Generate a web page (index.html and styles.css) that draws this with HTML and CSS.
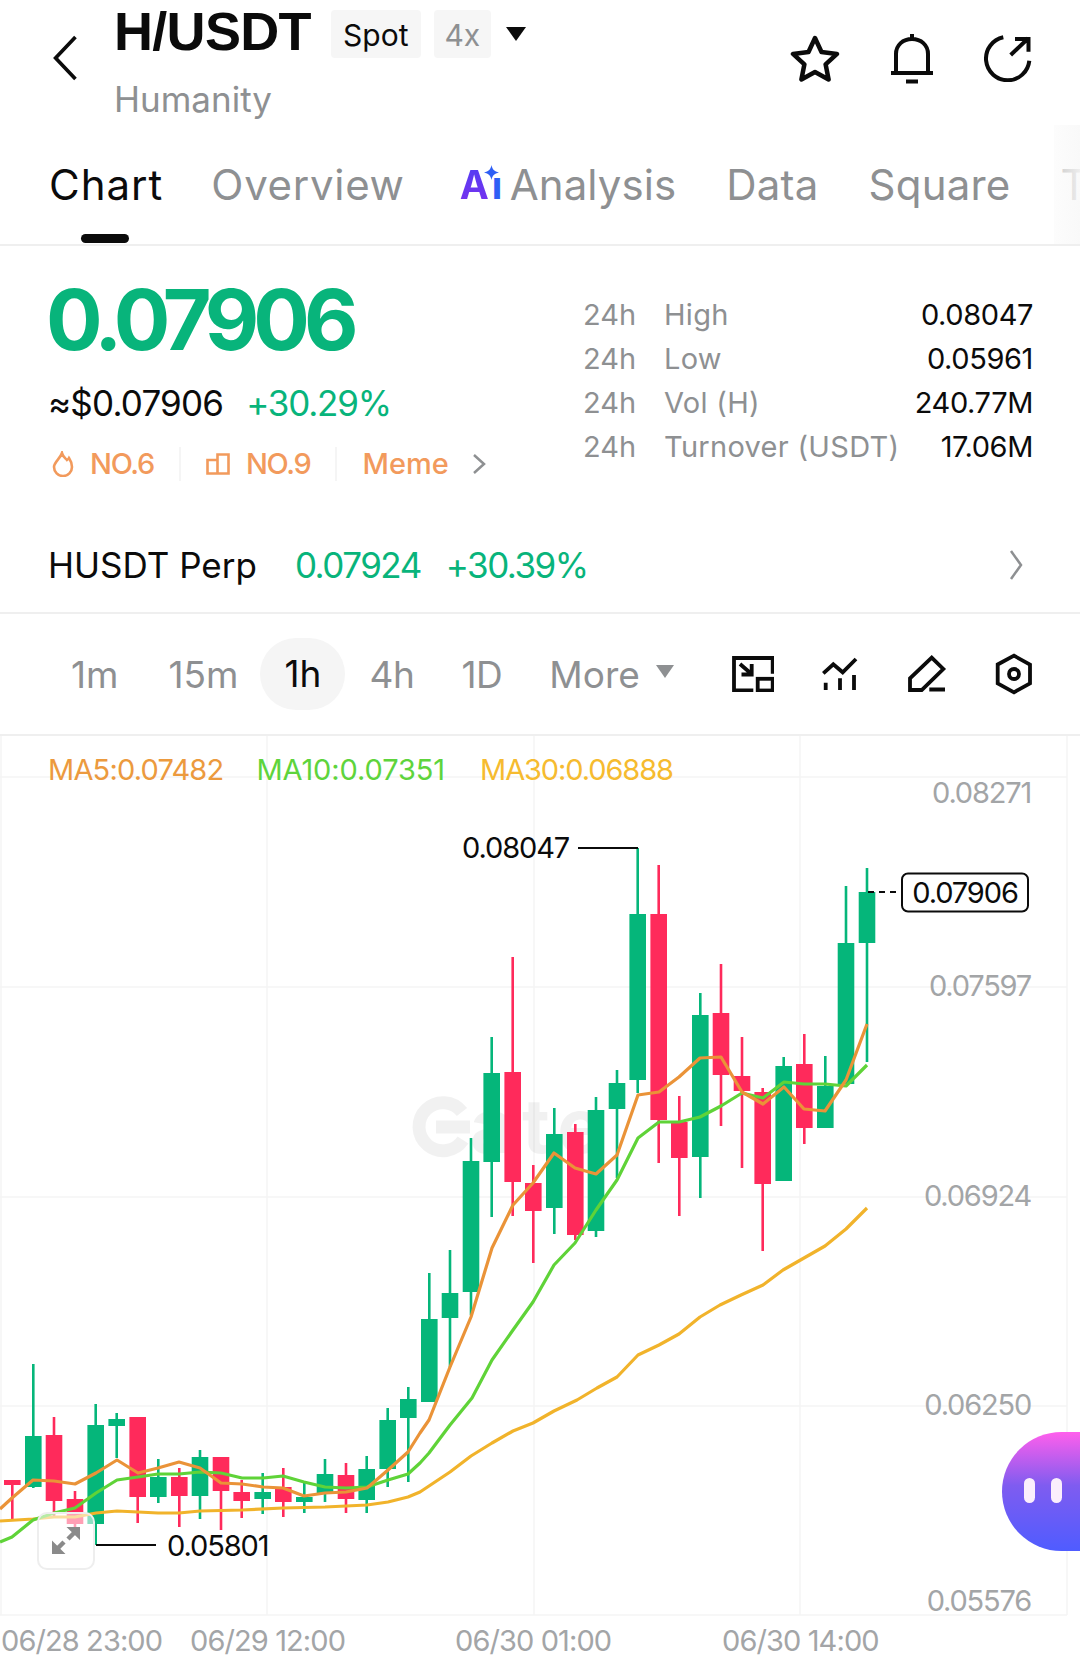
FILE: index.html
```html
<!DOCTYPE html>
<html lang="en">
<head>
  <meta charset="UTF-8" />
  <meta name="viewport" content="width=device-width, initial-scale=1.0" />
  <title>H/USDT Spot Chart</title>
  <link rel="stylesheet" href="styles.css">
</head>
<body>
  <div class="page">
    <div class="topbar">
      <svg class="back" viewBox="0 0 24 44"><path d="M22 2 3 22l19 20" /></svg>
      <div class="pair">
        <div class="pair-row">
          <h1>H/USDT</h1>
          <span class="tag">Spot</span>
          <span class="tag tag-lev">4x</span>
          <span class="tri"></span>
        </div>
        <p class="pair-name">Humanity</p>
      </div>
      <div class="top-icons">
        <svg class="star" viewBox="0 0 50 47"><path d="M25 3l6.500 14 15.500 1.900-11.400 10.400 3 15.200L25 37 11.400 44.500l3-15.200L3 18.900 18.500 17z" /></svg>
        <svg class="bell" viewBox="0 0 44 52"><path d="M22 2v5M6 41V22C6 13 13 7 22 7s16 6 16 15v19M1 41h42M16 49.500h12" /></svg>
        <svg class="reload" viewBox="0 0 48 48"><path d="M19.300 3.300A21.700 21.700 0 1 0 45.300 26.700M26.700 21 44.300 4.300M31 5h13.500v12.700" /></svg>
      </div>
    </div>

    <div class="tabs">
      <span class="tab tab-on">Chart</span>
      <span class="tab">Overview</span>
      <span class="tab tab-ai">
        <span class="ai-mark"><span class="ai-a">A</span><span class="ai-i">ı</span></span>
        <svg class="ai-star" viewBox="0 0 16 16"><path d="M8 0c.8 4.500 3 7 8 8-5 1-7.200 3.500-8 8-.8-4.500-3-7-8-8 5-1 7.200-3.500 8-8z" /></svg>
        Analysis
      </span>
      <span class="tab">Data</span>
      <span class="tab">Square</span>
      <span class="tab tab-cut">T</span>
      <span class="tab-line"></span>
      <span class="tab-fade"></span>
    </div>

    <div class="quote">
      <div class="quote-left">
        <div class="price">0.07906</div>
        <div class="price-sub"><span>≈$0.07906</span><span class="up">+30.29%</span></div>
        <div class="ranks">
          <span class="rank">
            <svg class="rank-icon" viewBox="0 0 22 26"><path d="M10 2c1 4 3 5 5 7 .8-.5 1.500-1 2-2 2 3 3 6 3 9a9 9 0 0 1-18 0c0-5 6-8 8-14z" /></svg>
            NO.6
          </span>
          <span class="rank">
            <svg class="rank-icon rank-icon-wide" viewBox="0 0 24 22"><path d="M1.500 7h10v13.500h-10zM11.500 20.500V1.500h11v19z" /></svg>
            NO.9
          </span>
          <span class="rank">Meme
            <svg class="more" viewBox="0 0 14 22"><path d="M2 2l10 9-10 9" /></svg>
          </span>
        </div>
      </div>
      <div class="stats">
        <div class="stat"><span class="stat-h">24h</span><span class="stat-name">High</span><span class="stat-val">0.08047</span></div>
        <div class="stat"><span class="stat-h">24h</span><span class="stat-name">Low</span><span class="stat-val">0.05961</span></div>
        <div class="stat"><span class="stat-h">24h</span><span class="stat-name">Vol (H)</span><span class="stat-val">240.77M</span></div>
        <div class="stat"><span class="stat-h">24h</span><span class="stat-name">Turnover (USDT)</span><span class="stat-val">17.06M</span></div>
      </div>
    </div>

    <div class="perp">
      <span class="perp-name">HUSDT Perp</span>
      <span class="up perp-num perp-price">0.07924</span>
      <span class="up perp-num">+30.39%</span>
      <svg class="perp-go" viewBox="0 0 14 32"><path d="M2 2l10 14L2 30" /></svg>
    </div>

    <div class="periods">
      <span class="period">1m</span>
      <span class="period">15m</span>
      <span class="period period-on">1h</span>
      <span class="period">4h</span>
      <span class="period">1D</span>
      <span class="period period-more">More<span class="tri tri-gray"></span></span>
      <div class="tools">
        <svg class="tool tool-a" viewBox="0 0 42 36"><path d="M21.300 34.500H2V2h38.700v15.800M8 8l11.500 10M9.500 18.500h10.200V8" /><rect x="25.700" y="22.800" width="15" height="11.700" /></svg>
        <svg class="tool tool-b" viewBox="0 0 40 36"><path d="M3.300 17.300l10-9 9.400 8L36 3M5.700 26.700V34M20 22.300V34M34 19v15" /></svg>
        <svg class="tool tool-c" viewBox="0 0 42 38"><path d="M25.700 2.700 37.300 14 15.700 35H4V23.300zM23.300 34.500H39" /></svg>
        <svg class="tool tool-d" viewBox="0 0 40 42"><path d="M20 2.700l16 8.800v18.800l-16 9-16.300-9V11.500z" /><circle cx="20" cy="21" r="5" /></svg>
      </div>
    </div>

    <div class="chart">
      <svg id="plot" class="plot" viewBox="0 736 1080 924">
        <g class="grid">
          <path d="M0 777H1067M0 987H1067M0 1197H1067M0 1406H1067M0 1615H1067M267 736V1615M534 736V1615M800 736V1615M1067 736V1615M1 736V1615" />
        </g>
        <g class="mark">
          <path d="M462 1112A24 24 0 1 0 463 1140M436 1127H470" />
          <text x="470" y="1153">ate</text>
        </g>
        <g id="candles"></g>
        <g id="lines"></g>
        <g class="axis-y">
          <text x="1031" y="803">0.08271</text>
          <text x="1031" y="996">0.07597</text>
          <text x="1031" y="1206">0.06924</text>
          <text x="1031" y="1415">0.06250</text>
          <text x="1031" y="1611">0.05576</text>
        </g>
        <g class="axis-x">
          <text x="1" y="1651">06/28 23:00</text>
          <text x="190" y="1651">06/29 12:00</text>
          <text x="455" y="1651">06/30 01:00</text>
          <text x="722" y="1651">06/30 14:00</text>
        </g>
        <g class="hi-lo">
          <text x="462" y="858">0.08047</text>
          <path d="M578 848H638" />
          <text x="167" y="1556">0.05801</text>
          <path d="M96 1545H156" />
          <path class="dash" d="M868 892H902" />
          <rect x="902" y="873.500" width="126" height="38" rx="6" />
          <text x="965" y="903" class="now">0.07906</text>
        </g>
      </svg>
      <div class="ma-row">
        <span class="ma5">MA5:0.07482</span>
        <span class="ma10">MA10:0.07351</span>
        <span class="ma30">MA30:0.06888</span>
      </div>
      <div class="expand">
        <svg viewBox="0 0 28 28"><path class="expand-fill" d="M0 13.500V27h13.500zM28 0v13L14.500 0z" /><path d="M5 22l7-7M16 12l7-7" /></svg>
      </div>
      <div class="bot"><span></span><span></span></div>
    </div>
  </div>
  <script src="chart.js"></script>
</body>
</html>
```

FILE: styles.css
```css
:root {
  --green: #08b47b;
  --gray: #8e9092;
  --axis: #a3a5a7;
  --orange: #f29a5c;
  --line: #efefef;
  --font: 'Inter', 'Noto Sans', sans-serif;
}
* {
  box-sizing: border-box;
}
body {
  margin: 0;
  background: #fff;
  font-family: var(--font);
  color: #0b0b0b;
}
.page {
  width: 1080px;
  height: 1660px;
  overflow: hidden;
}
svg {
  display: block;
  fill: none;
  stroke: #0b0b0b;
}

/* top bar */
.topbar {
  display: flex;
  height: 125px;
  padding-left: 52px;
}
.back {
  width: 26px;
  height: 46px;
  margin-top: 35px;
  stroke-width: 3.500;
}
.pair {
  margin-left: 36px;
}
.pair-row {
  display: flex;
  align-items: flex-start;
  margin-top: 1px;
}
h1 {
  margin: 0;
  font: bold 54px/60px 'Liberation Sans', sans-serif;
  letter-spacing: -0.7px;
}
.tag {
  width: 90px;
  height: 48px;
  margin: 9px 0 0 20px;
  background: #f6f6f6;
  border-radius: 4px;
  text-align: center;
  font-size: 30px;
  line-height: 50px;
}
.tag-lev {
  width: 57px;
  margin-left: 13px;
  color: var(--gray);
}
.tri {
  width: 0;
  height: 0;
  margin: 26px 0 0 15px;
  border-left: 10px solid transparent;
  border-right: 10px solid transparent;
  border-top: 14px solid #0b0b0b;
}
.pair-name {
  margin: 16px 0 0;
  font-size: 35px;
  line-height: 44px;
  color: var(--gray);
}
.top-icons {
  display: flex;
  align-items: center;
  gap: 50px;
  margin-left: auto;
  padding-right: 48px;
  height: 116px;
}
.star {
  width: 50px;
  height: 47px;
  stroke-width: 4.500;
  stroke-linejoin: round;
}
.bell {
  width: 44px;
  height: 52px;
  stroke-width: 4;
}
.reload {
  width: 48px;
  height: 48px;
  stroke-width: 4;
}

/* tabs */
.tabs {
  position: relative;
  display: flex;
  gap: 50px;
  height: 121px;
  padding: 33px 0 0 49px;
  border-bottom: 2px solid var(--line);
  overflow: hidden;
}
.tab {
  font-size: 42px;
  line-height: 54px;
  letter-spacing: 0.700px;
  color: var(--gray);
  white-space: nowrap;
}
.tab-on {
  margin-right: -2px;
  letter-spacing: 1px;
  color: #0b0b0b;
}
.tab-ai {
  position: relative;
  display: flex;
  margin-left: 5px;
  letter-spacing: 0.100px;
}
.tab-ai ~ .tab {
  letter-spacing: 0.200px;
}
.ai-mark {
  width: 50px;
  font-size: 39px;
  font-weight: 700;
  letter-spacing: 0;
}
.ai-a {
  background: linear-gradient(180deg, #4f3ff4, #7c30ee);
  -webkit-background-clip: text;
  background-clip: text;
  color: transparent;
}
.ai-i {
  margin-left: 3px;
  color: #2f5ff5;
}
.ai-star {
  position: absolute;
  left: 24px;
  top: 7px;
  width: 15px;
  height: 15px;
  fill: #2f5ff5;
  stroke: none;
}
.tab-cut {
  color: #b5b5b5;
}
.tab-line {
  position: absolute;
  left: 81px;
  bottom: 1px;
  width: 48px;
  height: 9px;
  background: #0b0b0b;
  border-radius: 5px;
}
.tab-fade {
  position: absolute;
  right: 0;
  top: 0;
  bottom: 0;
  width: 26px;
  background: linear-gradient(90deg, rgba(246, 246, 246, 0.3), rgba(248, 248, 248, 0.85));
}

/* quote */
.quote {
  display: flex;
  justify-content: space-between;
  height: 246px;
  padding: 0 47px 0 48px;
}
.price {
  margin: 29px 0 0 -2px;
  font-size: 84px;
  line-height: 90px;
  font-weight: 700;
  letter-spacing: -6px;
  color: var(--green);
}
.price-sub {
  display: flex;
  gap: 23px;
  margin-top: 16px;
  font-size: 35px;
  line-height: 44px;
  letter-spacing: -0.8px;
}
.price-sub .up {
  letter-spacing: -1.200px;
}
.up {
  color: var(--green);
}
.ranks {
  display: flex;
  margin: 22px 0 0 4px;
  height: 34px;
  color: var(--orange);
  font-size: 29px;
  font-weight: 500;
  line-height: 34px;
  letter-spacing: -1.300px;
}
.rank {
  display: flex;
  align-items: center;
  gap: 16px;
  padding-right: 25px;
  margin-right: 25px;
  border-right: 2px solid #f5f5f5;
}
.rank:last-child {
  border: 0;
  margin: 0;
  gap: 23px;
  letter-spacing: 0;
}
.rank-icon {
  width: 22px;
  height: 26px;
  stroke: var(--orange);
  stroke-width: 2.600;
}
.rank-icon-wide {
  width: 24px;
  height: 22px;
}
.more {
  width: 14px;
  height: 22px;
  stroke: var(--gray);
  stroke-width: 2.500;
}
.stats {
  width: 450px;
  padding-top: 47px;
}
.stat {
  display: flex;
  height: 44px;
  font-size: 29px;
  line-height: 44px;
  color: var(--gray);
}
.stat-h {
  width: 81px;
}
.stat-name {
  letter-spacing: 0.300px;
}
.stat-val {
  margin-left: auto;
  letter-spacing: -0.400px;
  color: #0b0b0b;
}

/* perpetual row */
.perp {
  display: flex;
  align-items: center;
  height: 122px;
  padding: 26px 57px 0 48px;
  border-bottom: 2px solid var(--line);
  font-size: 35px;
  gap: 25px;
}
.perp-num {
  letter-spacing: -1.500px;
}
.perp-price {
  margin-left: 13px;
}
.perp-go {
  width: 14px;
  height: 32px;
  margin-left: auto;
  stroke: var(--gray);
  stroke-width: 2.500;
}

/* periods */
.periods {
  display: flex;
  align-items: center;
  height: 122px;
  padding: 0 46px 0 71px;
  border-bottom: 2px solid var(--line);
  font-size: 37px;
  color: var(--gray);
}
.period {
  margin-right: 50px;
}
.period-on {
  width: 85px;
  height: 72px;
  margin: 0 24px 0 -28px;
  background: #f5f5f5;
  border-radius: 36px;
  text-align: center;
  line-height: 72px;
  color: #0b0b0b;
}
.period-on ~ .period {
  margin-right: 47px;
  letter-spacing: -0.400px;
}
.period-on ~ .period-more {
  display: flex;
  align-items: center;
  margin: 0;
  letter-spacing: 0;
}
.tri-gray {
  margin: 0 0 6px 16px;
  border-left-width: 9px;
  border-right-width: 9px;
  border-top: 13px solid var(--gray);
}
.tools {
  display: flex;
  align-items: center;
  gap: 46px;
  margin-left: auto;
}
.tool {
  stroke-width: 3.800;
}
.tool-a { width: 42px; height: 36px; }
.tool-b { width: 40px; height: 36px; }
.tool-c { width: 42px; height: 38px; }
.tool-d { width: 40px; height: 42px; }

/* chart */
.chart {
  position: relative;
}
.plot {
  width: 1080px;
  height: 924px;
}
.grid path {
  stroke: #f5f5f5;
  stroke-width: 1.500;
}
.mark {
  opacity: 0.05;
}
.mark path {
  stroke: #000;
  stroke-width: 13;
}
.mark text {
  font-size: 76px;
  font-weight: 700;
  letter-spacing: 8px;
  fill: #000;
}
text {
  stroke: none;
  font-family: var(--font);
  font-size: 29px;
  letter-spacing: -0.900px;
}
.axis-y text {
  fill: var(--axis);
  text-anchor: end;
  letter-spacing: -1.200px;
}
.axis-x text {
  fill: var(--axis);
}
.hi-lo text {
  fill: #0b0b0b;
  letter-spacing: -1.100px;
}
.hi-lo path,
.hi-lo rect {
  stroke: #0b0b0b;
  stroke-width: 2;
  fill: #fff;
}
.hi-lo .dash {
  stroke-dasharray: 6 5;
}
.hi-lo .now {
  text-anchor: middle;
}
.ma-row {
  position: absolute;
  left: 48px;
  top: 14px;
  display: flex;
  gap: 33px;
  font-size: 29px;
  line-height: 40px;
  letter-spacing: -0.800px;
}
.ma5 { color: #ec9a3e; }
.ma10 { color: #5ed43c; letter-spacing: -0.100px; }
.ma30 { color: #f6bb2f; letter-spacing: -1.100px; margin-left: 2px; }
.expand {
  position: absolute;
  left: 37px;
  top: 776px;
  width: 58px;
  height: 58px;
  padding: 13px;
  background: rgba(255, 255, 255, 0.55);
  border: 2px solid #eee;
  border-radius: 10px;
}
.expand svg {
  width: 28px;
  height: 28px;
  stroke: #8a8a8a;
  stroke-width: 4.500;
}
.expand-fill {
  fill: #8a8a8a;
  stroke: none;
}
.bot {
  position: absolute;
  left: 1002px;
  top: 696px;
  display: flex;
  gap: 16px;
  width: 78px;
  height: 119px;
  padding: 46px 0 0 22px;
  background: linear-gradient(180deg, #ff5fec, #7f5cf0 45%, #4f5cff);
  border-radius: 60px 0 0 60px;
}
.bot span {
  width: 11px;
  height: 25px;
  background: #fbeefc;
  border-radius: 6px;
}
```

FILE: chart.js
```js
// x, wick top, wick bottom, body top, body bottom, up?
const candles = [
  [12.3, 1480, 1520, 1480, 1485, 0],
  [33.3, 1364, 1488, 1436, 1487, 1],
  [54, 1417, 1517, 1435, 1501, 0],
  [75, 1491, 1530, 1499, 1524, 0],
  [95.7, 1404, 1545, 1425, 1524, 1],
  [116.7, 1413, 1458, 1419, 1426, 1],
  [137.7, 1417, 1523, 1417, 1497, 0],
  [158.3, 1459, 1503, 1477, 1497, 1],
  [179.3, 1468, 1527, 1477, 1496, 0],
  [200, 1450, 1519, 1457, 1496, 1],
  [221, 1457, 1530, 1457, 1491, 0],
  [241.7, 1480, 1518, 1492, 1501, 0],
  [262.7, 1473, 1514, 1492, 1499, 1],
  [283.3, 1468, 1517, 1487, 1502, 0],
  [304.3, 1482, 1513, 1497, 1502, 1],
  [325, 1459, 1502, 1474, 1493, 1],
  [346, 1463, 1513, 1475, 1499, 0],
  [366.7, 1456, 1513, 1469, 1500, 1],
  [387.7, 1408, 1487, 1420, 1469, 1],
  [408.3, 1387, 1482, 1399, 1418, 1],
  [429.3, 1273, 1402, 1319, 1402, 1],
  [450, 1250, 1367, 1293, 1318, 1],
  [471, 1138, 1315, 1161, 1292, 1],
  [491.7, 1037, 1217, 1073, 1162, 1],
  [512.7, 957, 1216, 1072, 1182, 0],
  [533.3, 1165, 1263, 1183, 1211, 0],
  [554.3, 1108, 1234, 1134, 1208, 1],
  [575.3, 1124, 1240, 1132, 1235, 0],
  [596, 1097, 1237, 1110, 1231, 1],
  [617, 1070, 1178, 1083, 1109, 1],
  [637.7, 848, 1093, 914, 1080, 1],
  [658.7, 865, 1163, 914, 1120, 0],
  [679.3, 1096, 1216, 1122, 1158, 0],
  [700.3, 993, 1198, 1015, 1157, 1],
  [721, 964, 1126, 1013, 1075, 0],
  [742, 1037, 1168, 1076, 1091, 0],
  [762.7, 1088, 1251, 1092, 1184, 0],
  [783.7, 1057, 1181, 1066, 1181, 1],
  [804.3, 1034, 1144, 1064, 1128, 0],
  [825.3, 1056, 1128, 1086, 1128, 1],
  [846, 886, 1084, 943, 1084, 1],
  [867, 868, 1062, 892, 943, 1]
];

const ma5 = "0,1509 12,1498 33,1480 54,1481 75,1484 96,1473 117,1460 138,1473 158,1468 179,1462 200,1468 221,1483 242,1484 263,1487 283,1488 304,1496 325,1493 346,1492 367,1488 388,1470 408,1452 420,1433 429,1420 450,1367 471,1317 492,1248 513,1205 533,1183 554,1153 575,1168 596,1174 617,1155 638,1095 659,1092 679,1077 700,1058 721,1057 742,1092 763,1104 784,1087 804,1109 825,1111 846,1080 867,1024";
const ma10 = "0,1542 12,1537 33,1520 54,1513 75,1508 96,1493 117,1480 138,1477 158,1474 179,1474 200,1472 221,1473 242,1478 263,1478 283,1476 304,1482 325,1487 346,1488 367,1487 388,1480 408,1474 420,1463 429,1453 450,1425 472,1398 492,1360 513,1330 533,1302 554,1265 575,1243 596,1210 617,1180 638,1138 659,1122 679,1122 700,1117 721,1106 742,1093 763,1098 784,1082 804,1084 825,1084 846,1086 867,1065";
const ma30 = "0,1521 33,1519 54,1517 75,1517 96,1513 117,1511 138,1512 158,1513 179,1513 200,1511 242,1510 283,1508 325,1507 367,1505 388,1502 408,1497 420,1492 429,1486 450,1472 471,1456 492,1443 513,1431 533,1423 554,1411 577,1400 597,1388 617,1377 638,1355 659,1345 679,1334 700,1317 720,1305 741,1295 763,1285 783,1270 804,1258 825,1246 846,1229 867,1208";

const NS = "http://www.w3.org/2000/svg";

function add(parent, tag, attrs) {
  const el = document.createElementNS(NS, tag);
  for (const key in attrs) el.setAttribute(key, attrs[key]);
  parent.appendChild(el);
}

const candleGroup = document.getElementById("candles");
candles.forEach(([x, top, bottom, bodyTop, bodyBottom, up]) => {
  const color = up ? "#05b67a" : "#ff2a5b";
  add(candleGroup, "line", { x1: x, x2: x, y1: top, y2: bottom, stroke: color, "stroke-width": 2.6 });
  add(candleGroup, "rect", { x: x - 8.3, y: bodyTop, width: 16.6, height: bodyBottom - bodyTop, fill: color, stroke: "none" });
});

const lineGroup = document.getElementById("lines");
[[ma30, "#f1b32b"], [ma10, "#5fd338"], [ma5, "#ea9338"]].forEach(([points, color]) => {
  add(lineGroup, "polyline", { points, stroke: color, "stroke-width": 3.2, fill: "none", "stroke-linejoin": "round" });
});
```
